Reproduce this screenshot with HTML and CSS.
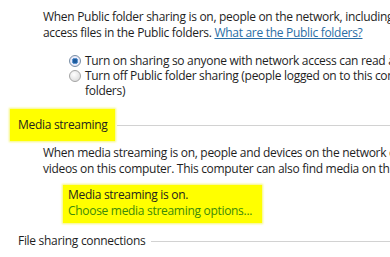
FILE: index.html
```html
<!DOCTYPE html>
<html lang="en">
<head>
    <meta charset="UTF-8">
    <meta name="viewport" content="width=device-width, initial-scale=1.0">
    <title>Network and Sharing</title>
    <link rel="stylesheet" href="styles.css">
</head>
<body>
    <div class="panel">
        <div class="section-body">
            <p class="desc">When Public folder sharing is on, people on the network, including homegroup members, can<br>access files in the Public folders. <a href="#" class="link">What are the Public folders?</a></p>

            <div class="options">
                <label class="option">
                    <span class="radio checked"></span>
                    <span class="option-text">Turn on sharing so anyone with network access can read and write files in the Public folders</span>
                </label>
                <label class="option">
                    <span class="radio"></span>
                    <span class="option-text">Turn off Public folder sharing (people logged on to this computer can still access these<br>folders)</span>
                </label>
            </div>
        </div>

        <div class="section-head">
            <span class="head-title highlight">Media streaming</span>
            <span class="head-rule"></span>
        </div>
        <div class="section-body">
            <p class="desc media-desc">When media streaming is on, people and devices on the network can access pictures, music, and<br>videos on this computer. This computer can also find media on the network.</p>
            <div class="status highlight">
                <div>Media streaming is on.</div>
                <a href="#" class="link-green">Choose media streaming options...</a>
            </div>
        </div>

        <div class="section-head plain">
            <span class="head-title">File sharing connections</span>
            <span class="head-rule"></span>
        </div>
    </div>
</body>
</html>
```

FILE: styles.css
```css
body { margin: 0; background: #fff; overflow: hidden; font-family: "Open Sans", "Noto Sans", sans-serif; font-size: 12px; letter-spacing: -0.3px; color: #1e1e1e; }
.panel { width: 700px; padding-top: 9px; }
.section-body { padding-left: 43px; }
.desc { margin: 0; line-height: 16px; white-space: nowrap; }
.media-desc { margin-top: 4px; }
.link { color: #2a6ea6; text-decoration: underline; }
.options { margin-top: 12px; padding-left: 26px; }
.option { display: flex; align-items: flex-start; gap: 4px; line-height: 15px; white-space: nowrap; }
.radio { width: 12px; height: 12px; margin-top: 2px; border-radius: 50%; border: 1px solid #a4a4a4; background: radial-gradient(circle at 40% 35%, #fff, #d4d4d4); box-sizing: border-box; flex: none; }
.radio.checked { background: radial-gradient(circle, #1d5a9c 0 2px, #5d96cf 2.5px 3px, #eef 3.5px, #dcdcdc); border-color: #7a8ea6; }
.highlight { background: #ffff00; box-shadow: 0 0 2px 1px #f6f67a; }
.section-head { display: flex; align-items: center; margin-top: 11px; padding-left: 10px; }
.section-head .head-title { padding: 9px 7px 9px 8px; line-height: 14px; white-space: nowrap; }
.head-rule { flex: 1; height: 1px; background: #d2d2d2; margin-left: 2px; }
.section-head.plain { margin-top: 10px; }
.section-head.plain .head-title { padding: 0 4px 0 8px; line-height: 16px; }
.status { display: inline-block; margin: 8px 0 0 20px; padding: 2px 10px 4px 5px; line-height: 16px; vertical-align: top; }
.link-green { color: #3c8a0a; text-decoration: none; }
```
